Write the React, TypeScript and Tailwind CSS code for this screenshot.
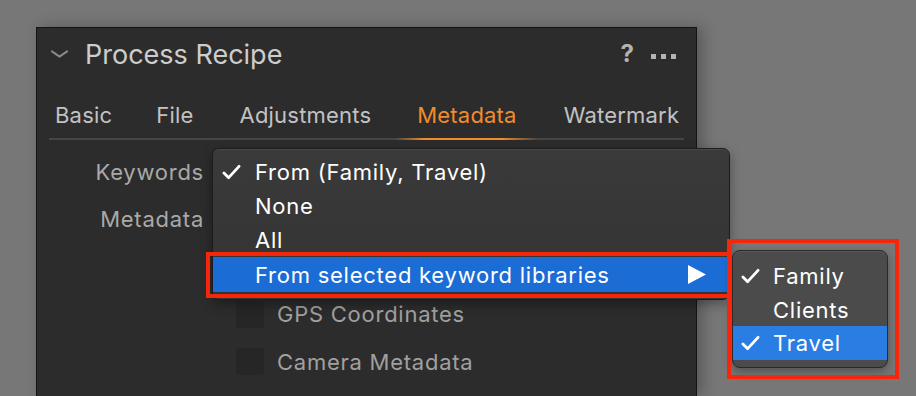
import React from "react";

const Check = ({ className = "" }: { className?: string }) => (
  <svg viewBox="0 0 20 17" className={className} fill="none">
    <path d="M2 9.5 L7 14.5 L18 2.5" stroke="currentColor" strokeWidth="3" strokeLinecap="round" strokeLinejoin="round" />
  </svg>
);

export default function App() {
  const font = { fontFamily: "Inter, 'Noto Sans', 'Liberation Sans', sans-serif" };
  return (
    <div className="relative w-[916px] h-[396px] overflow-hidden bg-[#777777]" style={font}>
      {/* Panel */}
      <div className="ml-[36px] mt-[27px] w-[661px] h-[369px] bg-[#2c2c2c] border border-b-0 border-[#141414] shadow-[6px_0_14px_rgba(0,0,0,0.25)] flex flex-col">
        {/* Header */}
        <div className="h-[52px] flex items-center pl-[13px] pr-[20px]">
          <svg viewBox="0 0 20 9" className="w-[19px] h-[8px] text-[#8a8a8a]" fill="none">
            <path d="M1.5 1.5 L10 7.5 L18.5 1.5" stroke="currentColor" strokeWidth="2.2" strokeLinecap="round" strokeLinejoin="round" />
          </svg>
          <div className="ml-[16px] text-[27px] text-[#cdcdcd] tracking-[0px] leading-none">Process Recipe</div>
          <div className="ml-auto flex items-center">
            <span className="text-[24px] font-bold text-[#b4b4b4] leading-none">?</span>
            <div className="ml-[17px] flex gap-[5px] mt-[4px]">
              <span className="w-[5px] h-[5px] bg-[#b4b4b4]" />
              <span className="w-[5px] h-[5px] bg-[#b4b4b4]" />
              <span className="w-[5px] h-[5px] bg-[#b4b4b4]" />
            </div>
          </div>
        </div>
        {/* Tabs */}
        <div className="mx-[12px] h-[60px] pt-[10px] relative flex items-center pl-[6px] text-[22px] tracking-[0.2px] text-[#c2c2c2] leading-none">
          <span>Basic</span>
          <span className="ml-[44px]">File</span>
          <span className="ml-[46px]">Adjustments</span>
          <span className="ml-[46px] text-[#f18b2c]">Metadata</span>
          <span className="ml-[47px]">Watermark</span>
          <div className="absolute left-0 right-0 bottom-[0px] h-[2px] bg-[#454545]" />
          <div className="absolute left-[346px] w-[143px] bottom-[0px] h-[2px] bg-[linear-gradient(90deg,rgba(241,139,44,0),#f18b2c_20%,#f18b2c_75%,rgba(241,139,44,0))]" />
        </div>
        {/* Body rows */}
        <div className="flex flex-col pt-[8px] text-[22px] tracking-[0.75px] leading-none">
          <div className="h-[47px] flex items-center">
            <span className="w-[167px] text-right text-[#a9a9a9]">Keywords</span>
          </div>
          <div className="h-[47px] flex items-center">
            <span className="w-[167px] text-right text-[#a9a9a9]">Metadata</span>
          </div>
          <div className="h-[48px]" />
          <div className="h-[48px] flex items-center pl-[199px]">
            <span className="w-[28px] h-[27px] rounded-[4px] bg-[#262626]" />
            <span className="ml-[13px] text-[#a0a0a0]">GPS Coordinates</span>
          </div>
          <div className="h-[47px] flex items-center pl-[199px]">
            <span className="w-[28px] h-[27px] rounded-[4px] bg-[#262626]" />
            <span className="ml-[13px] text-[#a0a0a0]">Camera Metadata</span>
          </div>
        </div>
      </div>

      {/* Main dropdown menu */}
      <div className="absolute left-[212px] top-[148px] w-[518px] h-[152px] rounded-[7px] border border-[#1c1c1c] bg-[linear-gradient(180deg,#3a3a3a,#333333)] shadow-[0_4px_12px_rgba(0,0,0,0.35),inset_0_1px_0_rgba(255,255,255,0.08)] pt-[6px] text-[22px] tracking-[0.75px] text-white leading-none">
        <div className="h-[34px] flex items-center">
          <Check className="ml-[9px] w-[19px] h-[16px]" />
          <span className="ml-[14px]">From (Family, Travel)</span>
        </div>
        <div className="h-[34px] flex items-center pl-[42px]">None</div>
        <div className="h-[34px] flex items-center pl-[42px]">All</div>
        <div className="h-[35px] flex items-center pl-[42px] bg-[#1b6cd5]">
          <span>From selected keyword libraries</span>
          <svg viewBox="0 0 18 19" className="ml-auto mr-[23px] w-[18px] h-[19px]">
            <path d="M0 0 L18 9.5 L0 19 Z" fill="white" />
          </svg>
        </div>
      </div>

      {/* Submenu */}
      <div className="absolute left-[732px] top-[250px] w-[156px] h-[118px] rounded-[8px] border border-[#2a2a2a] bg-[#4b4b4b] shadow-[0_4px_10px_rgba(0,0,0,0.3),inset_0_1px_0_rgba(255,255,255,0.08)] pt-[8px] text-[22px] tracking-[0.75px] text-white leading-none overflow-hidden">
        <div className="h-[34px] flex items-center">
          <Check className="ml-[8px] w-[19px] h-[16px]" />
          <span className="ml-[13px]">Family</span>
        </div>
        <div className="h-[33px] flex items-center pl-[40px]">Clients</div>
        <div className="h-[34px] flex items-center bg-[#2a7de3]">
          <Check className="ml-[8px] w-[19px] h-[16px]" />
          <span className="ml-[13px]">Travel</span>
        </div>
      </div>

      {/* Annotation boxes */}
      <div className="absolute left-[206px] top-[252px] w-[526px] h-[46px] border-[4px] border-[#f5260c]" />
      <div className="absolute left-[727px] top-[239px] w-[172px] h-[140px] border-[4px] border-[#f5260c]" />
    </div>
  );
}
